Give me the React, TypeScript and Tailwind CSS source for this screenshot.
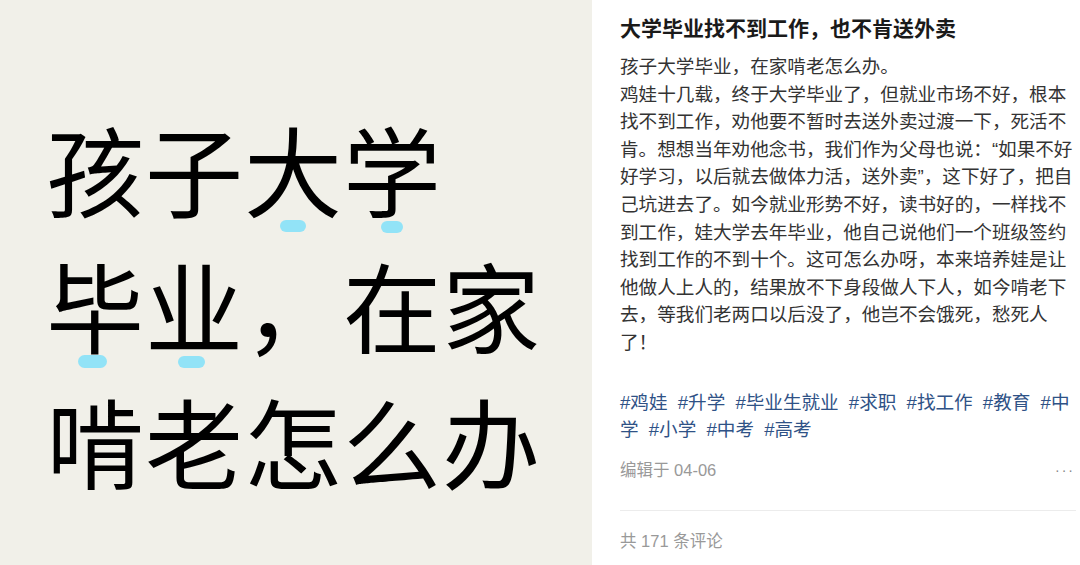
import React from "react";

const cjk = "font-['Liberation_Sans','Noto_Sans_CJK_SC',sans-serif]";

function Blob({ className }: { className: string }) {
  return <span className={`absolute rounded-full bg-[#92e3f7] ${className}`} />;
}

export default function App() {
  const tags = ["鸡娃", "升学", "毕业生就业", "求职", "找工作", "教育", "中学", "小学", "中考", "高考"];

  return (
    <div className={`flex h-[565px] w-[1080px] overflow-hidden bg-white ${cjk}`}>
      {/* cover image */}
      <div className="relative w-[592px] shrink-0 bg-[#f1f0e9] pl-[46px] pt-[99px]">
        <div className="font-['Noto_Sans_CJK_SC',sans-serif] text-[98px] leading-[136px] tracking-[1px] text-black">
          <div>孩子大学</div>
          <div>毕业，在家</div>
          <div>啃老怎么办</div>
        </div>
        <Blob className="left-[280px] top-[220px] h-[12px] w-[26px]" />
        <Blob className="left-[381px] top-[221px] h-[12px] w-[22px]" />
        <Blob className="left-[78px] top-[355px] h-[13px] w-[29px]" />
        <Blob className="left-[178px] top-[356px] h-[12px] w-[27px]" />
      </div>

      {/* post */}
      <div className="flex min-w-0 flex-1 flex-col pl-[28px] pr-[3px]">
        <h1 className="mt-[15px] text-[21px] font-bold leading-[28px] text-[#1a1a1a]">
          大学毕业找不到工作，也不肯送外卖
        </h1>
        <div className="mt-[10px] text-[18.6px] leading-[27.6px] text-[#333]">
          <p>孩子大学毕业，在家啃老怎么办。</p>
          <p>
            鸡娃十几载，终于大学毕业了，但就业市场不好，根本找不到工作，劝他要不暂时去送外卖过渡一下，死活不肯。想想当年劝他念书，我们作为父母也说：“如果不好好学习，以后就去做体力活，送外卖”，这下好了，把自己坑进去了。如今就业形势不好，读书好的，一样找不到工作，娃大学去年毕业，他自己说他们一个班级签约找到工作的不到十个。这可怎么办呀，本来培养娃是让他做人上人的，结果放不下身段做人下人，如今啃老下去，等我们老两口以后没了，他岂不会饿死，愁死人了！
          </p>
        </div>
        <div className="mt-[32px] text-[18.6px] leading-[27.6px] text-[#2f5286] [word-spacing:5px]">
          {tags.map((t) => `#${t}`).join(" ")}
        </div>
        <div className="mt-[14px] flex items-center justify-between pr-[2px] text-[16.5px] leading-[24px] text-[#999]">
          <span>编辑于 04-06</span>
          <span className="text-[14px] tracking-[2px] text-[#888]">···</span>
        </div>
        <div className="mt-[28px] h-px w-[456px] bg-[#ececec]" />
        <div className="mt-[18px] text-[16.5px] leading-[24px] text-[#999]">共 171 条评论</div>
      </div>
    </div>
  );
}
